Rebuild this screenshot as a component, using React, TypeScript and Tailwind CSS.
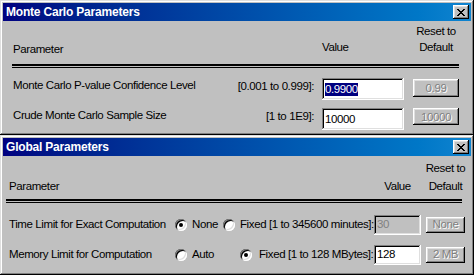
import React from "react";

const raised =
  "shadow-[inset_-1px_-1px_#000,inset_1px_1px_#fff,inset_-2px_-2px_#808080,inset_2px_2px_#dfdfdf]";
const sunken =
  "shadow-[inset_-1px_-1px_#fff,inset_1px_1px_#808080,inset_-2px_-2px_#dfdfdf,inset_2px_2px_#000]";
const frame =
  "shadow-[inset_-1px_-1px_#000,inset_1px_1px_#dfdfdf,inset_-2px_-2px_#808080,inset_2px_2px_#fff]";

function CloseBtn() {
  return (
    <span className={`flex h-[14px] w-[16px] items-center justify-center bg-[#c0c0c0] ${raised}`}>
      <svg width="8" height="7" viewBox="0 0 8 7" shapeRendering="crispEdges">
        <path
          d="M0 0h2v1h1v1h2v-1h1v-1h2v1h-1v1h-1v1h-1v1h1v1h1v1h1v1h-2v-1h-1v-1h-2v1h-1v1h-2v-1h1v-1h1v-1h1v-1h-1v-1h-1v-1h-1z"
          fill="#000"
        />
      </svg>
    </span>
  );
}

function Win({ title, className, children }: { title: string; className?: string; children: React.ReactNode }) {
  return (
    <div className={`flex flex-col bg-[#c0c0c0] p-[3px] ${frame} ${className ?? ""}`}>
      <div className="flex h-[18px] items-center justify-between bg-linear-to-r from-[#000080] to-[#1084d0] pl-[3px] pr-[2px]">
        <span className="text-[12px] font-bold tracking-[-0.2px] text-white">{title}</span>
        <CloseBtn />
      </div>
      {children}
    </div>
  );
}

function Separator({ className }: { className?: string }) {
  return <div className={`h-[4px] border-t-2 border-b border-black ${className ?? ""}`} />;
}

function Field({
  value,
  w,
  h,
  disabled,
  selected,
  className,
}: {
  value: string;
  w: string;
  h: string;
  disabled?: boolean;
  selected?: boolean;
  className?: string;
}) {
  return (
    <div
      className={`flex shrink-0 items-center px-[3px] ${w} ${h} ${sunken} ${
        disabled ? "bg-[#c0c0c0] text-[#808080]" : "bg-white text-black"
      } ${className ?? ""}`}
    >
      {selected ? <span className="bg-[#000080] leading-[13px] text-white">{value}</span> : value}
    </div>
  );
}

function ResetBtn({ label, w, h, className }: { label: string; w: string; h: string; className?: string }) {
  return (
    <div
      className={`flex shrink-0 items-center justify-center bg-[#c0c0c0] text-[#808080] [text-shadow:1px_1px_#fff] ${w} ${h} ${raised} ${className ?? ""}`}
    >
      {label}
    </div>
  );
}

function Radio({ checked }: { checked?: boolean }) {
  return (
    <span className="relative inline-block h-[12px] w-[12px] shrink-0 rounded-full bg-white shadow-[inset_1px_1px_#808080,inset_-1px_-1px_#fff,inset_2px_2px_#000,inset_-2px_-2px_#dfdfdf]">
      {checked && <span className="absolute left-[4px] top-[4px] h-[4px] w-[4px] rounded-full bg-black" />}
    </span>
  );
}

function ResetHead({ w, className }: { w: string; className?: string }) {
  return (
    <span className={`flex shrink-0 flex-col items-center whitespace-nowrap ${w} ${className ?? ""}`}>
      <span>Reset to</span>
      <span>Default</span>
    </span>
  );
}

export default function App() {
  return (
    <div className="flex h-[275px] w-[474px] flex-col bg-[#c0c0c0] font-['Liberation_Sans',Arial,sans-serif] text-[11.5px] tracking-[-0.4px] text-black">
      <Win title="Monte Carlo Parameters" className="h-[135px]">
        <div className="flex flex-col pl-[9px] pr-[12px]">
          {/* column headings */}
          <div className="mt-[2px] flex items-end leading-[16px]">
            <span className="-mb-[2px] flex-1 pl-[1px]">Parameter</span>
            <span className="w-[91px]">Value</span>
            <ResetHead w="w-[46px]" />
          </div>
          <Separator className="mt-[9px]" />

          <div className="mt-[10px] flex items-start leading-[14px]">
            <span className="flex-1 pl-[1px]">Monte Carlo P-value Confidence Level</span>
            <span className="mt-[1px]">[0.001 to 0.999]:</span>
            <Field value="0.9900" w="w-[82px]" h="h-[22px]" selected className="ml-[8px]" />
            <ResetBtn label="0.99" w="w-[46px]" h="h-[18px]" className="ml-[9px] mt-[1px]" />
          </div>

          <div className="mt-[8px] flex items-start leading-[14px]">
            <span className="flex-1 pl-[1px]">Crude Monte Carlo Sample Size</span>
            <span className="mt-[1px]">[1 to 1E9]:</span>
            <Field value="10000" w="w-[82px]" h="h-[22px]" className="ml-[8px]" />
            <ResetBtn label="10000" w="w-[46px]" h="h-[17px]" className="ml-[9px]" />
          </div>
        </div>
      </Win>

      <Win title="Global Parameters" className="h-[140px]">
        <div className="flex flex-col pl-[3px] pr-[6px]">
          <div className="mt-[3px] flex items-end leading-[18px]">
            <span className="flex-1 pl-[3px]">Parameter</span>
            <span className="w-[47px] text-center">Value</span>
            <ResetHead w="w-[39px]" className="ml-[5px]" />
          </div>
          <Separator className="mr-[3px] mt-[4px]" />

          <div className="mt-[12px] flex items-center">
            <span className="w-[169px] shrink-0 pl-[3px]">Time Limit for Exact Computation</span>
            <span className="flex w-[48px] shrink-0 items-center gap-[5px]">
              <Radio checked />
              None
            </span>
            <span className="flex min-w-0 flex-1 items-center gap-[5px] whitespace-nowrap">
              <Radio />
              Fixed [1 to 345600 minutes]:
            </span>
            <Field value="30" w="w-[47px]" h="h-[20px]" disabled />
            <ResetBtn label="None" w="w-[39px]" h="h-[16px]" className="ml-[5px]" />
          </div>

          <div className="mt-[10px] flex items-center">
            <span className="w-[169px] shrink-0 pl-[3px]">Memory Limit for Computation</span>
            <span className="flex w-[65px] shrink-0 items-center gap-[5px]">
              <Radio />
              Auto
            </span>
            <span className="flex min-w-0 flex-1 items-center gap-[7px] whitespace-nowrap">
              <Radio checked />
              Fixed [1 to 128 MBytes]:
            </span>
            <Field value="128" w="w-[47px]" h="h-[20px]" />
            <ResetBtn label="2 MB" w="w-[39px]" h="h-[16px]" className="ml-[5px]" />
          </div>
        </div>
      </Win>
    </div>
  );
}
